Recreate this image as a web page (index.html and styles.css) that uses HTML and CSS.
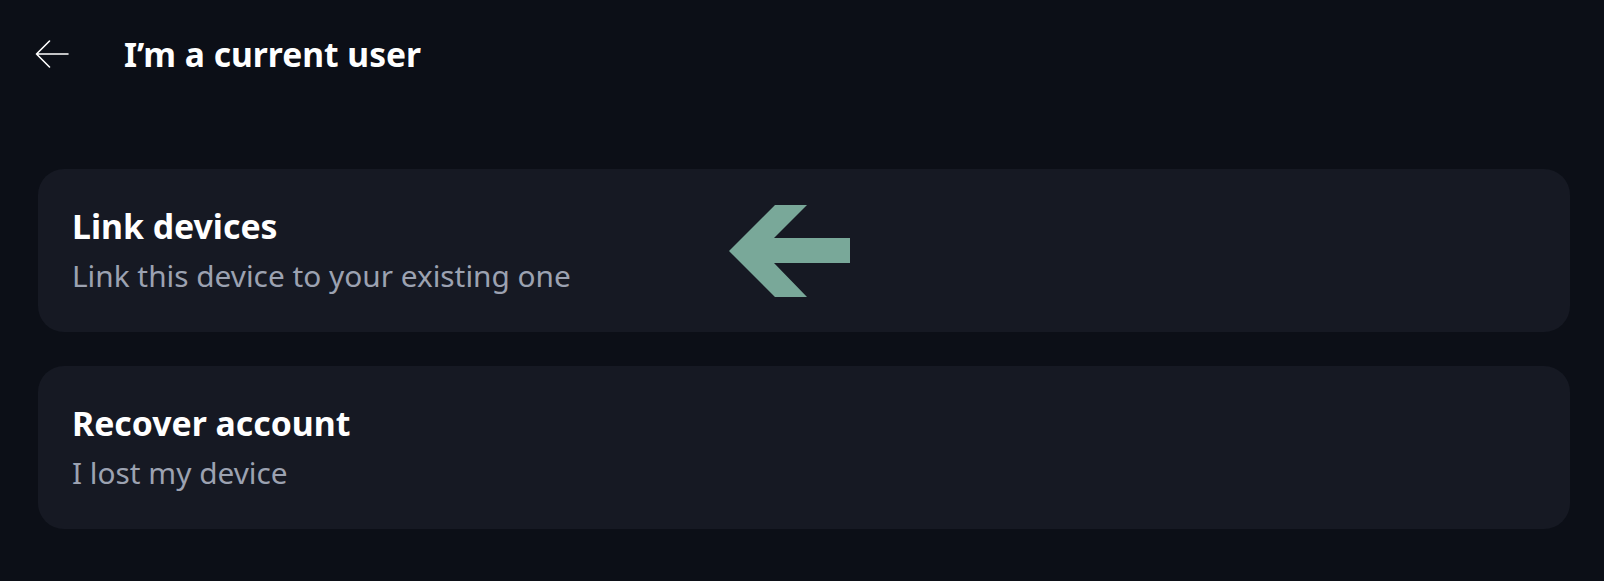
FILE: index.html
```html
<!DOCTYPE html>
<html lang="en">
<head>
<meta charset="utf-8">
<title>I’m a current user</title>
<link rel="stylesheet" href="styles.css">
</head>
<body>
<header class="topbar">
  <button class="back" aria-label="Back">
    <svg width="34" height="28" viewBox="0 0 34 28" fill="none" stroke="#ffffff" stroke-width="1.6" stroke-linecap="round" stroke-linejoin="round">
      <path d="M33 14H1.5M14.5 1L1.5 14L14.5 27"/>
    </svg>
  </button>
  <h1 class="title">I’m a current user</h1>
</header>
<main class="options">
  <div class="card">
    <div class="card-title">Link devices</div>
    <div class="card-sub">Link this device to your existing one</div>
    <svg class="pointer" width="122" height="93" viewBox="0 0 122 93">
      <polygon fill="#79a899" points="0,46 46,0 78,0 45,33 121,33 121,58 45,58 78,92 46,92"/>
    </svg>
  </div>
  <div class="card">
    <div class="card-title">Recover account</div>
    <div class="card-sub">I lost my device</div>
  </div>
</main>
</body>
</html>
```
FILE: styles.css
```css
html, body {
  margin: 0;
  padding: 0;
}
body {
  background: #0c0f17;
  width: 1604px;
  height: 581px;
  overflow: hidden;
  font-family: "Noto Sans", "Open Sans", sans-serif;
  color: #ffffff;
}
.topbar {
  height: 108px;
  display: flex;
  align-items: center;
  padding-left: 35px;
  box-sizing: border-box;
}
.back {
  background: none;
  border: 0;
  padding: 0;
  width: 34px;
  height: 28px;
  display: flex;
  cursor: pointer;
}
.title {
  margin: 0 0 0 55px;
  font-size: 33.6px;
  font-weight: 700;
  line-height: 44px;
}
.options {
  padding: 61px 34px 0 38px;
  display: flex;
  flex-direction: column;
  gap: 34px;
}
.card {
  position: relative;
  background: #161923;
  border-radius: 26px;
  height: 163px;
  box-sizing: border-box;
  padding: 35px 36px 0 34px;
}
.card-title {
  font-size: 33.8px;
  font-weight: 700;
  line-height: 44px;
}
.card-sub {
  font-size: 29.8px;
  line-height: 40px;
  margin-top: 8px;
  color: #9ca2b1;
}
.pointer {
  position: absolute;
  left: 691px;
  top: 36px;
}
```
